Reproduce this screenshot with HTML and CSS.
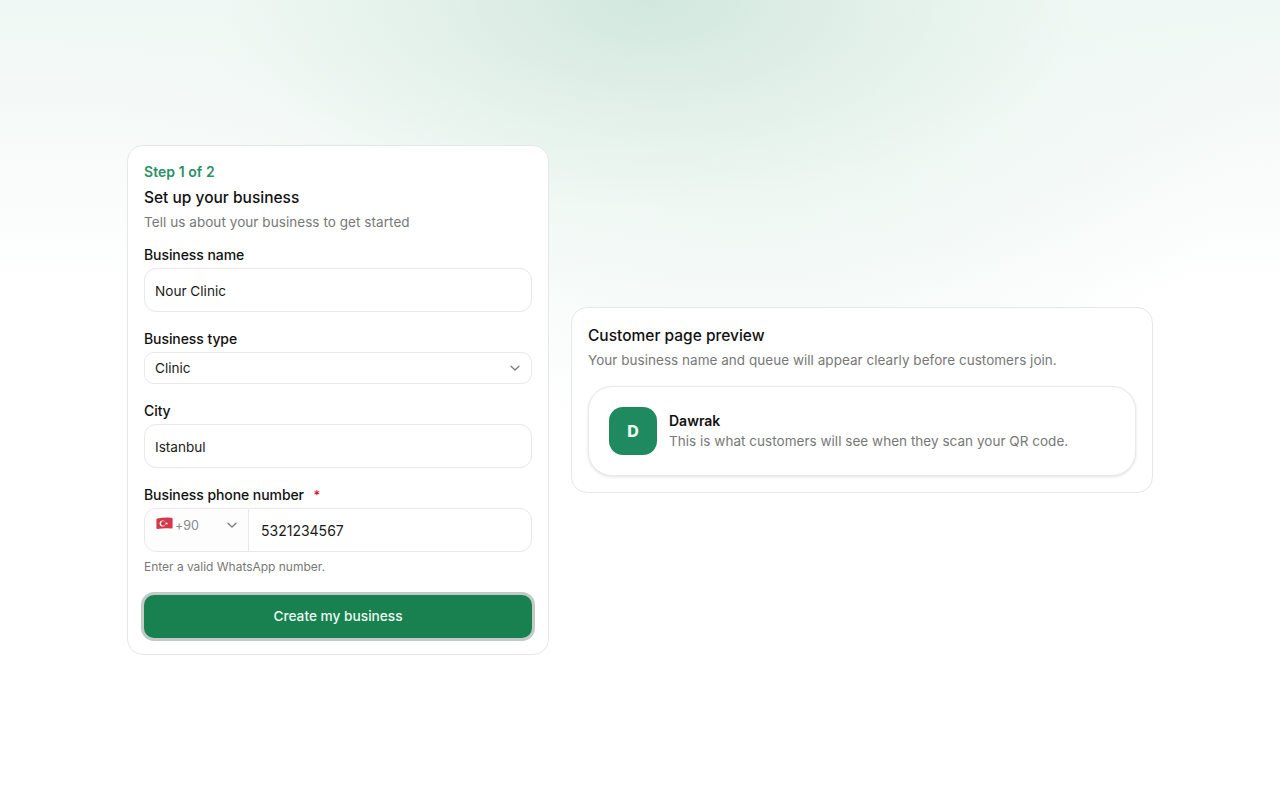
FILE: index.html
```html
<!DOCTYPE html>
<html lang="en">
<head>
<meta charset="utf-8">
<title>Set up your business</title>
<link rel="stylesheet" href="styles.css">
</head>
<body>
<main class="page">
  <section class="card form-card">
    <p class="step">Step 1 of 2</p>
    <h1 class="title">Set up your business</h1>
    <p class="sub">Tell us about your business to get started</p>
    <div class="field">
      <label class="label">Business name</label>
      <div class="input">Nour Clinic</div>
    </div>
    <div class="field">
      <label class="label">Business type</label>
      <div class="input select">Clinic
        <svg class="chev" width="12" height="12" viewBox="0 0 12 12"><path d="M2 4.2 6 8l4-3.8" fill="none" stroke="#777" stroke-width="1.2" stroke-linecap="round" stroke-linejoin="round"/></svg>
      </div>
    </div>
    <div class="field">
      <label class="label">City</label>
      <div class="input">Istanbul</div>
    </div>
    <div class="field phone-field">
      <label class="label">Business phone number <span class="req">*</span></label>
      <div class="input phone">
        <div class="code">
          <svg class="flag" width="17" height="13" viewBox="0 0 17 13"><path d="M1.5 1.5 Q8 .2 15.5.8 Q16.6.9 16.6 2 L16.6 10.6 Q16.6 11.6 15.5 11.5 Q8 11 1.5 12 Q.4 12.1.4 11 L.4 2.6 Q.4 1.6 1.5 1.5Z" fill="#d23a4c"/><circle cx="6.6" cy="6.4" r="3" fill="#fff"/><circle cx="7.4" cy="6.4" r="2.4" fill="#d23a4c"/><path d="m10.6 4.9.4 1.1 1.1 0-.9.7.3 1.1-.9-.7-.9.7.3-1.1-.9-.7 1.1 0z" fill="#fff"/></svg>
          <span class="dial">+90</span>
          <svg class="chev-code" width="12" height="12" viewBox="0 0 12 12"><path d="M2 4.2 6 8l4-3.8" fill="none" stroke="#777" stroke-width="1.2" stroke-linecap="round" stroke-linejoin="round"/></svg>
        </div>
        <div class="number">5321234567</div>
      </div>
      <p class="hint">Enter a valid WhatsApp number.</p>
    </div>
    <button class="submit" type="button">Create my business</button>
  </section>
  <section class="card preview-card">
    <h2 class="title">Customer page preview</h2>
    <p class="sub">Your business name and queue will appear clearly before customers join.</p>
    <div class="preview">
      <div class="avatar">D</div>
      <div class="preview-text">
        <div class="brand">Dawrak</div>
        <div class="brand-sub">This is what customers will see when they scan your QR code.</div>
      </div>
    </div>
  </section>
</main>
</body>
</html>
```
FILE: styles.css
```css
* { box-sizing: border-box; }
html, body { margin: 0; padding: 0; }
body {
  height: 800px;
  overflow: hidden;
  font-family: Inter, "Liberation Sans", sans-serif;
  color: #111;
  background:
    radial-gradient(ellipse 600px 290px at 650px 0, rgba(207,230,219,.9) 0%, rgba(222,238,230,.65) 40%, rgba(240,248,244,.3) 72%, rgba(255,255,255,0) 100%),
    radial-gradient(ellipse 520px 340px at 740px 100px, rgba(232,244,238,.85) 0%, rgba(238,247,243,.55) 60%, rgba(255,255,255,0) 100%),
    linear-gradient(180deg, #eff8f4 0, #f4f9f7 90px, #ffffff 290px);
}
.page {
  display: flex;
  align-items: center;
  justify-content: center;
  gap: 22px;
  height: 800px;
}
.card {
  background: #fff;
  border: 1px solid #e6e8e7;
  border-radius: 16px;
}
.form-card { width: 422px; height: 510px; padding: 16px; }
.preview-card { width: 582px; height: 186px; padding: 16px; }
.step { margin: 1px 0 0; font-size: 14px; line-height: 18px; font-weight: 600; letter-spacing: .05px; color: #2a8f66; }
.title { margin: 0; font-size: 15.5px; line-height: 24px; font-weight: 500; color: #111; }
.form-card .title { margin-top: 5px; }
.sub { margin: 2px 0 0; font-size: 13.5px; line-height: 20px; letter-spacing: .06px; color: #787878; }
.preview-card .sub { letter-spacing: .03px; }
.field { margin-top: 5px; }
.field + .field { margin-top: 18px; }
.form-card .sub + .field { margin-top: 14px; }
.label { display: block; font-size: 14px; line-height: 18px; font-weight: 450; letter-spacing: -.08px; color: #111; margin-bottom: 4px; }
.req { color: #d0112b; margin-left: 6px; font-size: 13px; }
.input {
  display: flex;
  align-items: center;
  height: 44px;
  padding: 2px 10px 0;
  border: 1px solid #e8e8e8;
  border-radius: 12px;
  background: #fff;
  font-size: 13.6px;
  color: #1a1a1a;
}
.select { height: 32px; justify-content: space-between; border-radius: 10px; padding: 0 10px; }
.phone { padding: 0; }
.code {
  display: flex;
  align-items: flex-start;
  width: 104px;
  height: 42px;
  padding: 7px 0 0 11px;
  border-right: 1px solid #e8e8e8;
  background: #fdfdfd;
  border-radius: 12px 0 0 12px;
}
.flag { flex: none; margin-top: 1px; }
.dial { margin: 1px 0 0 2px; font-size: 12.5px; line-height: 18px; letter-spacing: -.05px; color: #888; }
.chev-code { margin: 3px 0 0 27px; }
.number { padding-left: 12px; font-size: 14px; color: #1a1a1a; }
.hint { margin: 7px 0 0; font-size: 12px; line-height: 16px; letter-spacing: -.02px; color: #787878; }
.submit {
  display: block;
  width: 100%;
  height: 43px;
  margin-top: 20px;
  padding: 0 0 2px;
  border: 0;
  border-radius: 10px;
  background: #198050;
  box-shadow: 0 0 0 3px #c2cbc6;
  font-family: inherit;
  font-size: 13.7px;
  font-weight: 450;
  color: #eafaf2;
}
.preview {
  display: flex;
  align-items: center;
  gap: 12px;
  height: 90px;
  margin-top: 16px;
  padding: 0 20px;
  border: 1px solid #e8e9e8;
  border-radius: 24px;
  box-shadow: 0 1px 3px rgba(0,0,0,.12);
  background: #fff;
}
.avatar {
  display: flex;
  align-items: center;
  justify-content: center;
  width: 48px;
  height: 48px;
  border-radius: 14px;
  background: #1f8a5f;
  color: #eaf8f1;
  font-size: 16px;
  font-weight: 800;
}
.brand { font-size: 14px; line-height: 20px; font-weight: 600; color: #111; }
.brand-sub { font-size: 13.5px; line-height: 20px; letter-spacing: .03px; color: #787878; }
```
